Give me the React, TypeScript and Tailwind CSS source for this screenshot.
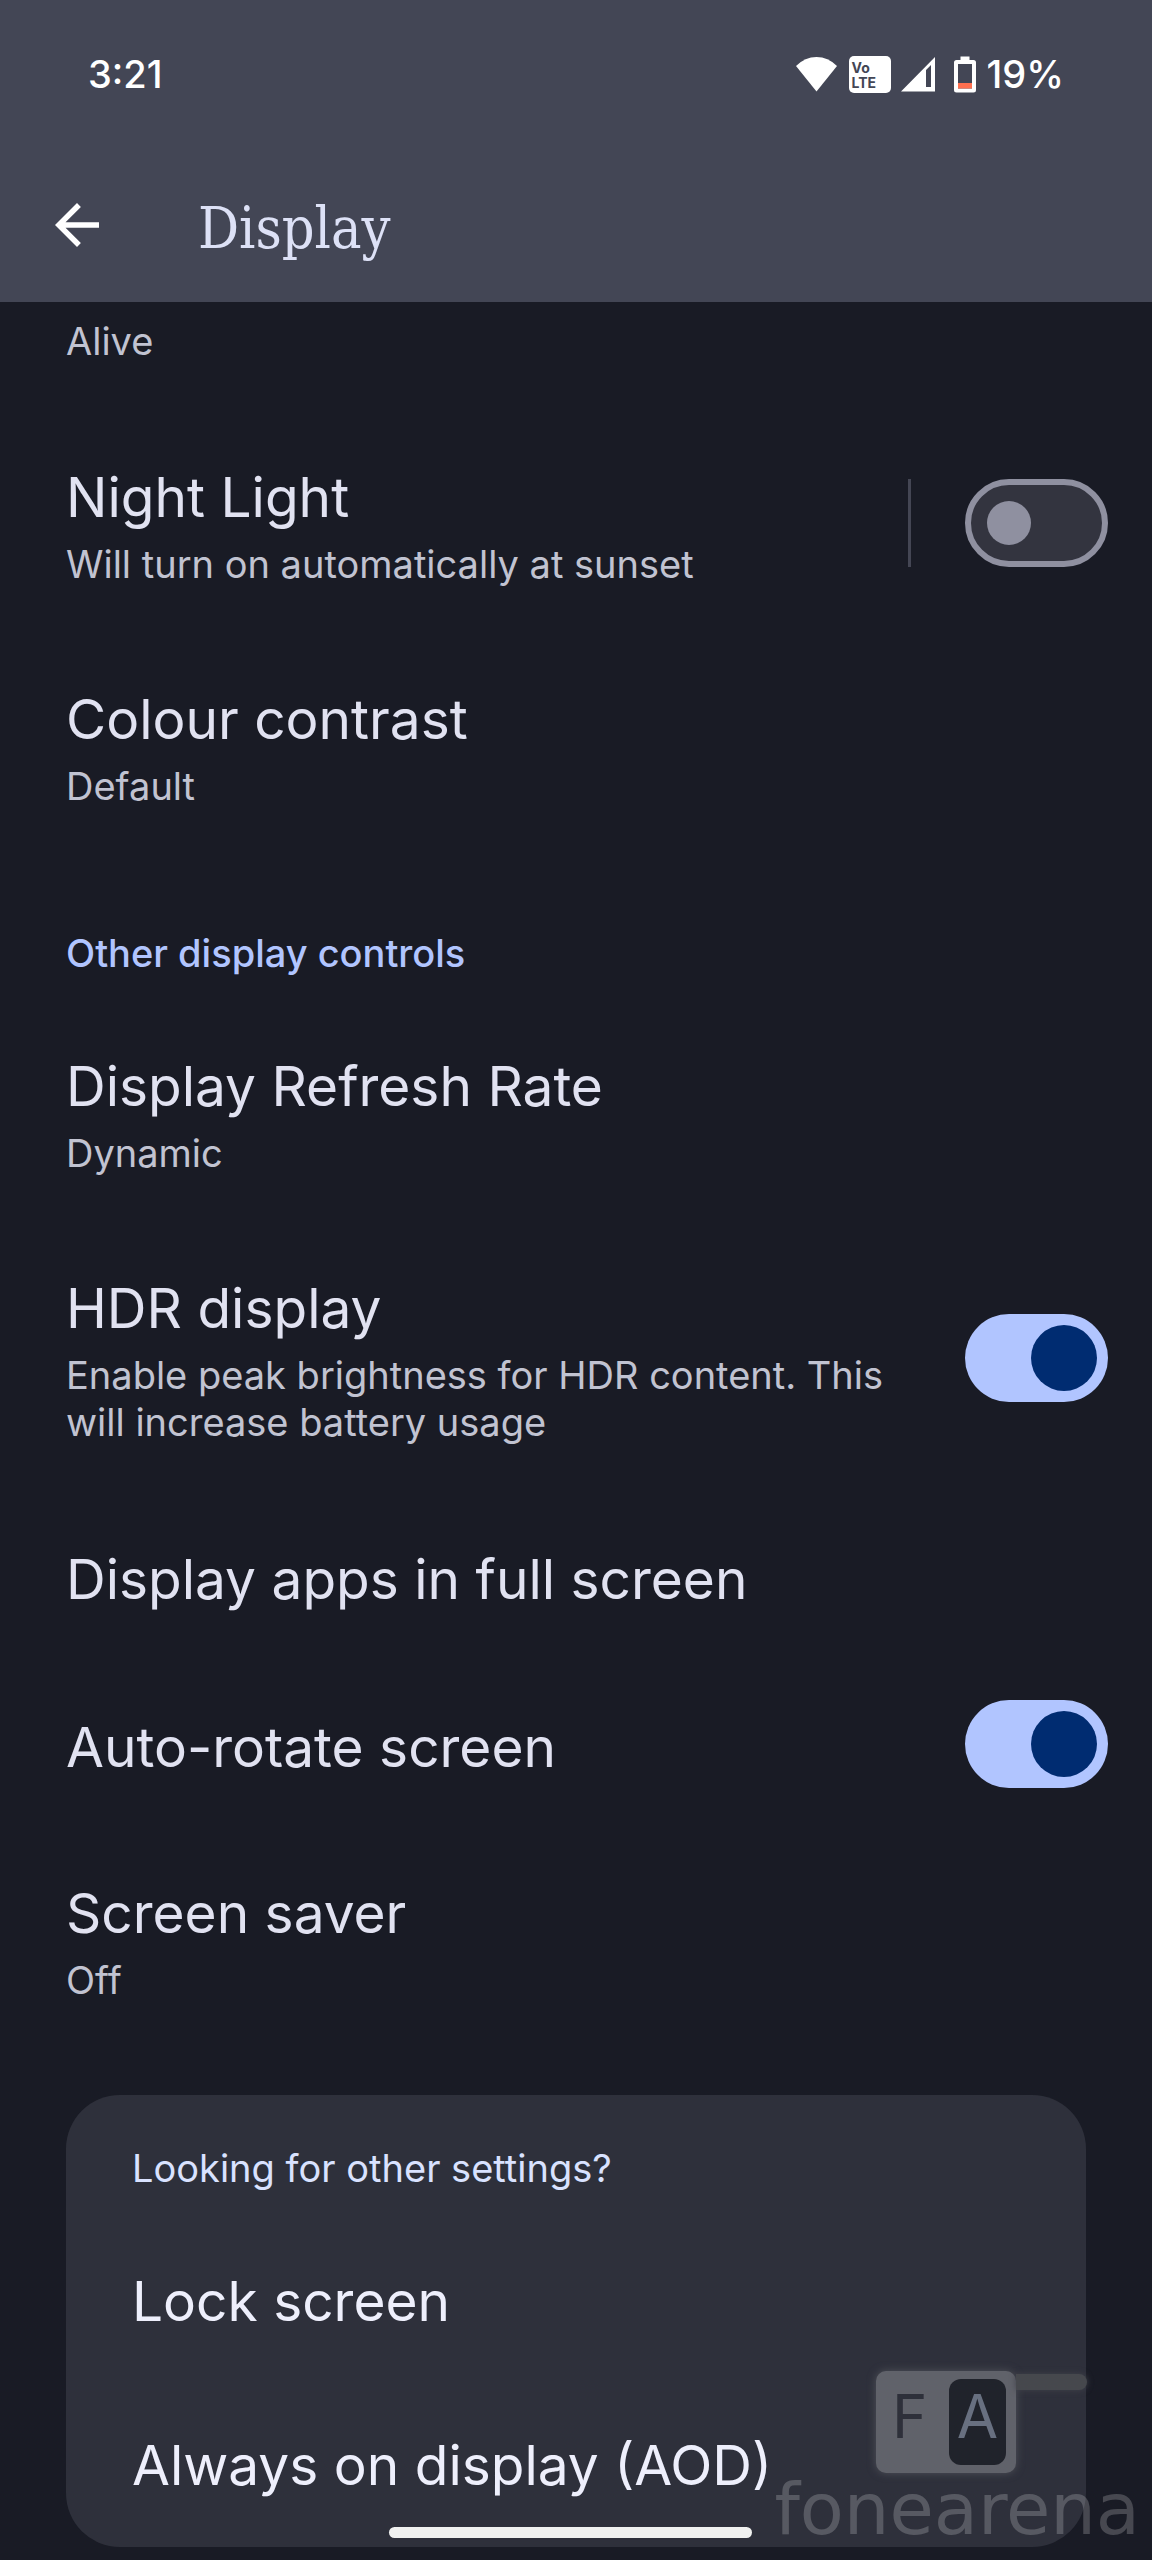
import { useId, useState } from "react";
import type { ReactNode } from "react";
import { clsx } from "clsx";

type TextProps = {
  title: string;
  summary?: string;
};

function RowText({ title, summary }: TextProps) {
  return (
    <>
      <span className="block text-[55px] leading-[66px] text-[#e1e2f1]">{title}</span>
      {summary && (
        <span className="mt-[11px] block text-[38px] leading-[47px] text-[#c1c3d1]">{summary}</span>
      )}
    </>
  );
}

function Row({ children }: { children: ReactNode }) {
  return (
    <li className="flex min-h-[168px] items-center gap-11 pr-11 pb-[6px] pl-[66px]">{children}</li>
  );
}

function LinkRow({ title, summary }: TextProps) {
  return (
    <Row>
      <button type="button" className="flex-1 pt-[49px] pb-[43px] text-left">
        <RowText title={title} summary={summary} />
      </button>
    </Row>
  );
}

type SwitchProps = {
  id?: string;
  label?: string;
  defaultOn?: boolean;
};

function Switch({ id, label, defaultOn = false }: SwitchProps) {
  const [on, setOn] = useState(defaultOn);

  return (
    <input
      id={id}
      type="checkbox"
      role="switch"
      aria-label={label}
      checked={on}
      onChange={(e) => setOn(e.target.checked)}
      className={clsx(
        "flex h-[88px] w-[143px] shrink-0 appearance-none items-center rounded-full before:rounded-full before:content-['']",
        on
          ? "justify-end bg-[#b1c5ff] pr-[11px] before:size-[66px] before:bg-[#002c71]"
          : "border-6 border-[#8f90a0] bg-[#33343f] pl-4 before:size-11 before:bg-[#8f90a0]"
      )}
    />
  );
}

function SwitchRow({ title, summary, defaultOn }: TextProps & { defaultOn?: boolean }) {
  const id = useId();

  return (
    <Row>
      <label htmlFor={id} className="flex-1 pt-[49px] pb-[43px]">
        <RowText title={title} summary={summary} />
      </label>
      <Switch id={id} defaultOn={defaultOn} />
    </Row>
  );
}

function StatusBar() {
  return (
    <div className="flex h-[148px] items-center justify-between pr-[88px] pl-[88px] font-medium text-white">
      <time className="text-[38px] leading-[47px]">3:21</time>
      <div className="flex items-center">
        {/* Wi-Fi */}
        <svg className="mr-3 h-9 w-[41px]" viewBox="0 0 41 36" fill="currentColor">
          <path d="M0 10Q9 1 20.500 1T41 10L20.500 35.500Z" />
        </svg>
        <div className="mr-[10px] h-[37px] w-[42px] rounded-[5px] bg-white pt-[4px] pl-[3px] text-[14px] leading-[15px] font-bold text-[#434655]">
          Vo
          <br />
          LTE
        </div>
        {/* Mobile signal */}
        <svg className="mr-[19px] h-9 w-[34px]" viewBox="0 0 34 36" fill="currentColor" fillRule="evenodd">
          <path d="M34 1V35.500H0ZM25 14V31H30V9Z" />
        </svg>
        {/* Battery */}
        <svg className="mr-[11px] h-[37px] w-[22px]" viewBox="0 0 22 37">
          <path
            fill="white"
            fillRule="evenodd"
            d="M6.500 0.500H15.500V4H19.500Q22 4 22 6.500V34Q22 36.500 19.500 36.500H2.500Q0 36.500 0 34V6.500Q0 4 2.500 4H6.500ZM4 8V32.500H18V8Z"
          />
          <path fill="#ff6f4f" d="M4 27H18V32.500H4Z" />
        </svg>
        <span className="text-[38px] leading-[47px]">19%</span>
      </div>
    </div>
  );
}

function Watermark() {
  return (
    <div className="pointer-events-none absolute right-3 bottom-[15px] flex flex-col items-end text-white/20" aria-hidden="true">
      <div className="mr-[53px] flex items-start">
        <div className="flex h-[102px] w-[140px] justify-between rounded-[10px] bg-[#60626a] py-2 pr-[10px] pl-4 text-[60px] leading-[74px] shadow-[0_0_8px_#50525a]">
          <span className="text-[#2e303a]">F</span>
          <span className="h-[86px] w-[57px] rounded-[12px] bg-[#20232b] text-center text-[#687080]">A</span>
        </div>
        <div className="mt-[3px] h-4 w-[71px] rounded-r-lg bg-[#46484d] shadow-[0_0_6px_#40424a]" />
      </div>
      <span className="font-['DejaVu_Sans',sans-serif] text-[72px] leading-[72px]">fonearena</span>
    </div>
  );
}

export default function App() {
  return (
    <div className="relative min-h-screen bg-[#191b25] pb-[13px] font-['Inter',sans-serif]">
      <header className="bg-[#434655] pb-[41px]">
        <StatusBar />
        <div className="flex items-start gap-[88px] pt-[44px] pl-11">
          <button type="button" aria-label="Navigate up" className="size-[66px] text-white">
            <svg className="size-full" viewBox="0 0 24 24" fill="currentColor">
              <path d="M20 11H7.830l5.590-5.590L12 4l-8 8 8 8 1.410-1.410L7.830 13H20v-2z" />
            </svg>
          </button>
          <h1 className="pt-[3px] font-['DejaVu_Serif_Condensed','DejaVu_Serif',serif] text-[57px] leading-[66px] text-[#dde1f6]">
            Display
          </h1>
        </div>
      </header>

      <main>
        <p className="pt-4 pb-[50px] pl-[66px] text-[38px] leading-[47px] text-[#c1c3d1]">Alive</p>

        <ul>
          <Row>
            <button type="button" className="flex-1 pt-[49px] pb-[43px] text-left">
              <RowText title="Night Light" summary="Will turn on automatically at sunset" />
            </button>
            <div className="border-l-3 border-[#444654] pl-[54px]">
              <Switch label="Night Light" />
            </div>
          </Row>
          <LinkRow title="Colour contrast" summary="Default" />
        </ul>

        <h2 className="pt-[71px] pb-[27px] pl-[66px] text-[38px] leading-[47px] font-medium text-[#b1c5ff]">
          Other display controls
        </h2>
        <ul>
          <LinkRow title="Display Refresh Rate" summary="Dynamic" />
          <SwitchRow
            title="HDR display"
            summary="Enable peak brightness for HDR content. This will increase battery usage"
            defaultOn
          />
          <LinkRow title="Display apps in full screen" />
          <SwitchRow title="Auto-rotate screen" defaultOn />
          <LinkRow title="Screen saver" summary="Off" />
        </ul>

        <section className="mx-[66px] mt-[42px] rounded-[54px] bg-[#2e303b] px-[66px] pt-[50px]">
          <h2 className="pb-[27px] text-[38px] leading-[47px] text-[#d9e2ff]">Looking for other settings?</h2>
          <ul className="text-[55px] leading-[66px] text-[#eeeffc]">
            <li className="py-[49px]">
              <a href="#lock-screen">Lock screen</a>
            </li>
            <li className="py-[49px]">
              <a href="#aod">Always on display (AOD)</a>
            </li>
          </ul>
        </section>
      </main>

      <Watermark />
      {/* Gesture bar */}
      <div className="absolute bottom-[22px] left-[389px] h-[11px] w-[363px] rounded-full bg-[#f0f1f0]" />
    </div>
  );
}
